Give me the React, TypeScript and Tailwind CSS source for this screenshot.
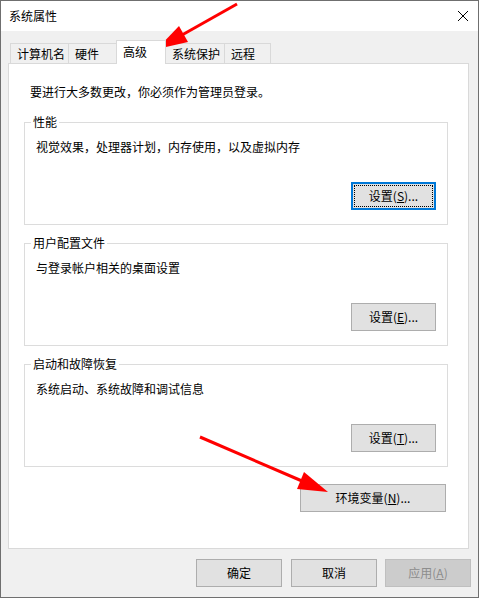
import React, { ReactNode } from "react";

const font = { fontFamily: '"Noto Sans CJK SC", "Noto Sans", sans-serif' };

const tabs = [
  { label: "计算机名", w: "w-[59px]" },
  { label: "硬件", w: "w-[48px]" },
  { label: "高级", w: "w-[50px]", active: true },
  { label: "系统保护", w: "w-[59px]" },
  { label: "远程", w: "w-[46px]" },
];

// Win32-style push button, label with an underlined access key
function DlgButton({
  children,
  className = "",
  focused = false,
  disabled = false,
}: {
  children: ReactNode;
  className?: string;
  focused?: boolean;
  disabled?: boolean;
}) {
  return (
    <button
      disabled={disabled}
      className={
        "relative flex h-[28px] items-center justify-center text-[12px] leading-[16px] " +
        (focused
          ? "border-2 border-[#0078d7] bg-[#e1e1e1] text-black "
          : disabled
            ? "border border-[#bfbfbf] bg-[#cccccc] text-[#8d8d8d] "
            : "border border-[#adadad] bg-[#e1e1e1] text-black ") +
        className
      }
    >
      {focused && (
        <span className="pointer-events-none absolute inset-[1px] border border-dotted border-black" />
      )}
      {children}
    </button>
  );
}

function Group({
  title,
  desc,
  children,
  className = "",
}: {
  title: string;
  desc: string;
  children: ReactNode;
  className?: string;
}) {
  return (
    <fieldset
      className={
        "ml-[15px] w-[424px] border border-[#dcdcdc] pb-[14px] " + className
      }
    >
      <legend className="ml-[6px] px-[2px] text-[12px] leading-[16px]">
        {title}
      </legend>
      <div className="mt-[9px] pl-[11px] text-[12px] leading-[16px]">
        {desc}
      </div>
      <div className="mt-[27px] flex justify-end pr-[11px]">{children}</div>
    </fieldset>
  );
}

export default function App() {
  return (
    <div
      className="relative flex h-[598px] w-[479px] flex-col border border-[#6f6f6f] bg-white text-black"
      style={font}
    >
      {/* title bar */}
      <div className="flex h-[30px] items-center justify-between bg-white pl-[8px] pr-[10px]">
        <span className="text-[12px] leading-[16px]">系统属性</span>
        <svg width="10" height="10" viewBox="0 0 10 10" className="mr-[0px]">
          <path d="M0 0 L10 10 M10 0 L0 10" stroke="#000" strokeWidth="1" />
        </svg>
      </div>

      <div className="flex flex-1 flex-col bg-[#f0f0f0] pl-[7px]">
        {/* tab strip */}
        <div className="ml-[2px] mt-[9px] flex h-[23px] items-end">
          {tabs.map((t, i) =>
            t.active ? (
              <div
                key={t.label}
                className={
                  "relative z-10 -mb-px -ml-px h-[24px] border-l border-r border-t border-[#d9d9d9] bg-white pl-[6px] pt-[3px] text-[12px] leading-[16px] " +
                  t.w
                }
              >
                {t.label}
              </div>
            ) : (
              <div
                key={t.label}
                className={
                  "h-[20px] border-r border-t border-[#d9d9d9] bg-[#f0f0f0] pl-[6px] pt-[2px] text-[12px] leading-[16px] " +
                  (i === 0 ? "border-l " : "") +
                  t.w
                }
              >
                {t.label}
              </div>
            )
          )}
        </div>

        {/* tab page */}
        <div className="h-[486px] w-[461px] border border-[#d9d9d9] bg-white">
          <div className="pl-[21px] pt-[20px] text-[12px] leading-[16px]">
            要进行大多数更改，你必须作为管理员登录。
          </div>

          <Group
            title="性能"
            desc="视觉效果，处理器计划，内存使用，以及虚拟内存"
            className="mt-[14px]"
          >
            <DlgButton focused className="w-[85px]">
              设置(<u>S</u>)...
            </DlgButton>
          </Group>

          <Group
            title="用户配置文件"
            desc="与登录帐户相关的桌面设置"
            className="mt-[10px]"
          >
            <DlgButton className="w-[85px]">
              设置(<u>E</u>)...
            </DlgButton>
          </Group>

          <Group
            title="启动和故障恢复"
            desc="系统启动、系统故障和调试信息"
            className="mt-[10px]"
          >
            <DlgButton className="w-[85px]">
              设置(<u>T</u>)...
            </DlgButton>
          </Group>

          <div className="ml-[291px] mt-[17px]">
            <DlgButton className="w-[146px]">
              环境变量(<u>N</u>)...
            </DlgButton>
          </div>
        </div>

        {/* dialog buttons */}
        <div className="mt-[10px] flex pl-[188px]">
          <DlgButton className="w-[86px]">确定</DlgButton>
          <DlgButton className="ml-[9px] w-[86px]">取消</DlgButton>
          <DlgButton disabled className="ml-[8px] w-[86px]">
            应用(<u>A</u>)
          </DlgButton>
        </div>
      </div>

      {/* red annotation arrows */}
      <svg
        className="pointer-events-none absolute left-[-1px] top-[-1px]"
        width="479"
        height="598"
        viewBox="0 0 479 598"
      >
        <line x1="237" y1="4" x2="182" y2="35" stroke="#ff0000" strokeWidth="3" />
        <polygon points="157,49 188,42 179,26" fill="#ff0000" />
        <line x1="200" y1="437" x2="302" y2="481" stroke="#ff0000" strokeWidth="3" />
        <polygon points="328,492 297,489 304,472" fill="#ff0000" />
      </svg>
    </div>
  );
}
